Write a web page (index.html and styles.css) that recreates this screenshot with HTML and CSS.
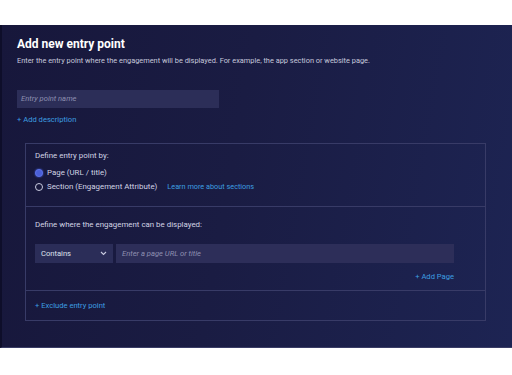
FILE: index.html
```html
<!DOCTYPE html>
<html lang="en">
<head>
  <meta charset="UTF-8">
  <title>Add new entry point</title>
  <link rel="stylesheet" href="styles.css">
</head>
<body>
  <div class="panel">
    <h1>Add new entry point</h1>
    <p class="sub">Enter the entry point where the engagement will be displayed. For example, the app section or website page.</p>

    <div class="name-field">Entry point name</div>
    <a class="link add-desc">+ Add description</a>

    <div class="box">
      <div class="section top">
        <div class="label">Define entry point by:</div>
        <div class="radio-row"><span class="radio on"></span>Page (URL / title)</div>
        <div class="radio-row"><span class="radio"></span>Section (Engagement Attribute)<a class="link learn">Learn more about sections</a></div>
      </div>
      <div class="section mid">
        <div class="label">Define where the engagement can be displayed:</div>
        <div class="url-row">
          <div class="select">Contains
            <svg width="7" height="5" viewBox="0 0 7 5"><path d="M1 1l2.5 2.5L6 1" fill="none" stroke="#c9cbe0" stroke-width="1.1"/></svg>
          </div>
          <div class="url-input">Enter a page URL or title</div>
        </div>
        <div class="add-page"><a class="link">+ Add Page</a></div>
      </div>
      <div class="section bottom">
        <a class="link">+ Exclude entry point</a>
      </div>
    </div>
  </div>
</body>
</html>
```

FILE: styles.css
```css
body { margin: 0; background: #fff; font-family: Roboto, "Liberation Sans", sans-serif; }
.panel { margin-top: 25px; height: 323px; box-sizing: border-box; padding: 12px 26px 0 15px; color: #e4e5f0;
  background: linear-gradient(100deg, #17173b 0%, #1a1c43 45%, #1d2453 100%);
  border-left: 2px solid #0e0e2a; border-bottom: 1px solid #3a3d66; }
h1 { margin: 0; font-size: 12px; font-weight: bold; color: #fff; line-height: 14px; }
.sub { margin: 5px 0 0; font-size: 7.4px; color: #c6c8dc; line-height: 10px; }
.name-field { margin-top: 24px; width: 202px; height: 18px; box-sizing: border-box; padding-left: 4px; background: #2c2e58;
  font-size: 7.6px; font-style: italic; color: #8d8fb0; line-height: 18px; }
.link { color: #3d9ee0; font-size: 7.6px; text-decoration: none; }
.add-desc { display: block; margin-top: 7px; line-height: 10px; }
.box { margin: 18px 0 0 8px; border: 1px solid #383b67; }
.section { padding: 0 9px; }
.top { padding-top: 7px; height: 63px; box-sizing: border-box; border-bottom: 1px solid #383b67; }
.label { font-size: 7.9px; color: #d2d4e4; line-height: 10px; }
.top .label { margin-bottom: 7px; }
.radio-row { display: flex; align-items: center; font-size: 7.9px; color: #d2d4e4; line-height: 10px; margin-top: 4px; }
.radio { width: 6px; height: 6px; border: 1px solid #c9cbe0; border-radius: 50%; margin: 0 4px 0 0; }
.radio.on { background: #4a5fd8; border-color: #5c70e6; box-shadow: 0 0 2px #4b63e0; }
.learn { margin-left: 10px; font-size: 7.3px; }
.mid { padding-top: 13px; height: 84px; box-sizing: border-box; border-bottom: 1px solid #383b67; }
.url-row { display: flex; gap: 3px; margin-top: 14px; width: 419px; }
.select { width: 78px; height: 19px; box-sizing: border-box; background: #2b2d58; padding: 0 6px; display: flex;
  align-items: center; justify-content: space-between; font-size: 7.6px; color: #dfe0ec; }
.url-input { flex: 1; height: 19px; line-height: 19px; background: #2d2e59; padding-left: 6px; font-size: 7.6px; font-style: italic; color: #8d8fb0; }
.add-page { width: 419px; text-align: right; margin-top: 6px; line-height: 10px; }
.bottom { height: 29px; box-sizing: border-box; padding-top: 7px; line-height: 10px; }
```
